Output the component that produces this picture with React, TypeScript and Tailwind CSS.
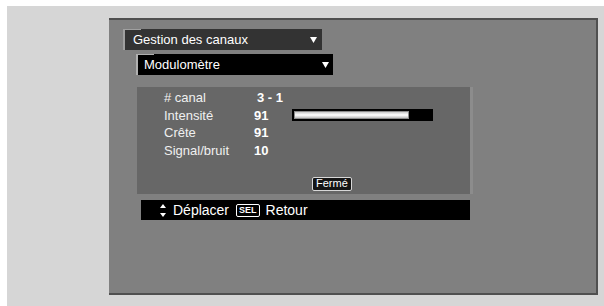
import React from "react";

const rows = [
  { label: "# canal", value: "3 - 1", shift: true },
  { label: "Intensité", value: "91", bar: 83 },
  { label: "Crête", value: "91" },
  { label: "Signal/bruit", value: "10" },
];

function Arrow() {
  return (
    <svg width="7" height="6" viewBox="0 0 7 6" className="shrink-0">
      <path d="M0 0 H7 L3.5 6 Z" fill="#ffffff" />
    </svg>
  );
}

function UpDown() {
  return (
    <svg width="6" height="13" viewBox="0 0 6 13" className="shrink-0">
      <path d="M3 0 L6 4 H0 Z" fill="#ffffff" />
      <path d="M3 13 L6 9 H0 Z" fill="#ffffff" />
    </svg>
  );
}

export default function App() {
  return (
    <div className="w-[604px] h-[306px] bg-white pl-[7px] pt-[6px] font-['Liberation_Sans',Arial,sans-serif] overflow-hidden">
      <div className="w-full h-full bg-[#d6d6d6] pl-[102px] pt-[12px]">
        {/* panneau principal */}
        <div className="w-[489px] h-[277px] bg-[#808080] border-t-2 border-r-2 border-b-2 border-[#505050] flex flex-col">
          {/* menu Gestion des canaux */}
          <div className="relative ml-[14px] mt-[9px] w-[199px] h-[21px] bg-[#333333] border-l-2 border-[#a0a0a0] flex items-center justify-between pl-[8px] pr-[5px]">
            <span className="absolute left-0 top-0 w-[16px] h-px bg-[#a0a0a0]" />
            <span className="text-[13px] leading-none text-white">Gestion des canaux</span>
            <Arrow />
          </div>

          {/* sous-menu Modulomètre */}
          <div className="relative ml-[27px] mt-[4px] w-[197px] h-[21px] bg-black border-l-2 border-[#b0b0b0] flex items-center justify-between pl-[6px] pr-[4px]">
            <span className="absolute left-0 top-0 w-[16px] h-px bg-[#b0b0b0]" />
            <span className="text-[13px] leading-none text-white">Modulomètre</span>
            <Arrow />
          </div>

          {/* zone de mesure */}
          <div className="ml-[28px] mt-[12px] w-[336px] h-[107px] bg-[#676767] border-r-[3px] border-[#8c8c8c] pt-[2px] pl-[27px] flex flex-col">
            {rows.map((r) => (
              <div key={r.label} className="flex items-center h-[18px] text-[13px] leading-none text-[#f0f0f0]">
                <span className="w-[90px]">{r.label}</span>
                <span className={"w-[38px] font-bold text-white " + (r.shift ? "pl-[3px]" : "")}>{r.value}</span>
                {r.bar !== undefined && (
                  <div className="w-[141px] h-[12px] bg-black flex items-center pl-[2px]">
                    <div
                      className="h-[8px] border border-[#8a8a8a] bg-gradient-to-b from-[#c8c8c8] via-white to-[#bdbdbd]"
                      style={{ width: `${r.bar}%` }}
                    />
                  </div>
                )}
              </div>
            ))}
            <div className="ml-[148px] mt-[11px]">
              <span className="inline-flex items-center h-[14px] px-[3px] bg-[#151515] border border-[#d8d8d8] rounded-[2px] text-[11px] leading-none text-white">
                Fermé
              </span>
            </div>
          </div>

          {/* barre d'aide */}
          <div className="ml-[32px] mt-[6px] w-[329px] h-[20px] bg-black flex items-center pl-[19px] gap-[7px] text-[14px] leading-none text-white">
            <UpDown />
            <span>Déplacer</span>
            <span className="inline-flex items-center justify-center h-[13px] px-[2px] border border-white rounded-[2px] text-[9px] font-bold leading-none">
              SEL
            </span>
            <span className="-ml-[1px]">Retour</span>
          </div>
        </div>
      </div>
    </div>
  );
}
